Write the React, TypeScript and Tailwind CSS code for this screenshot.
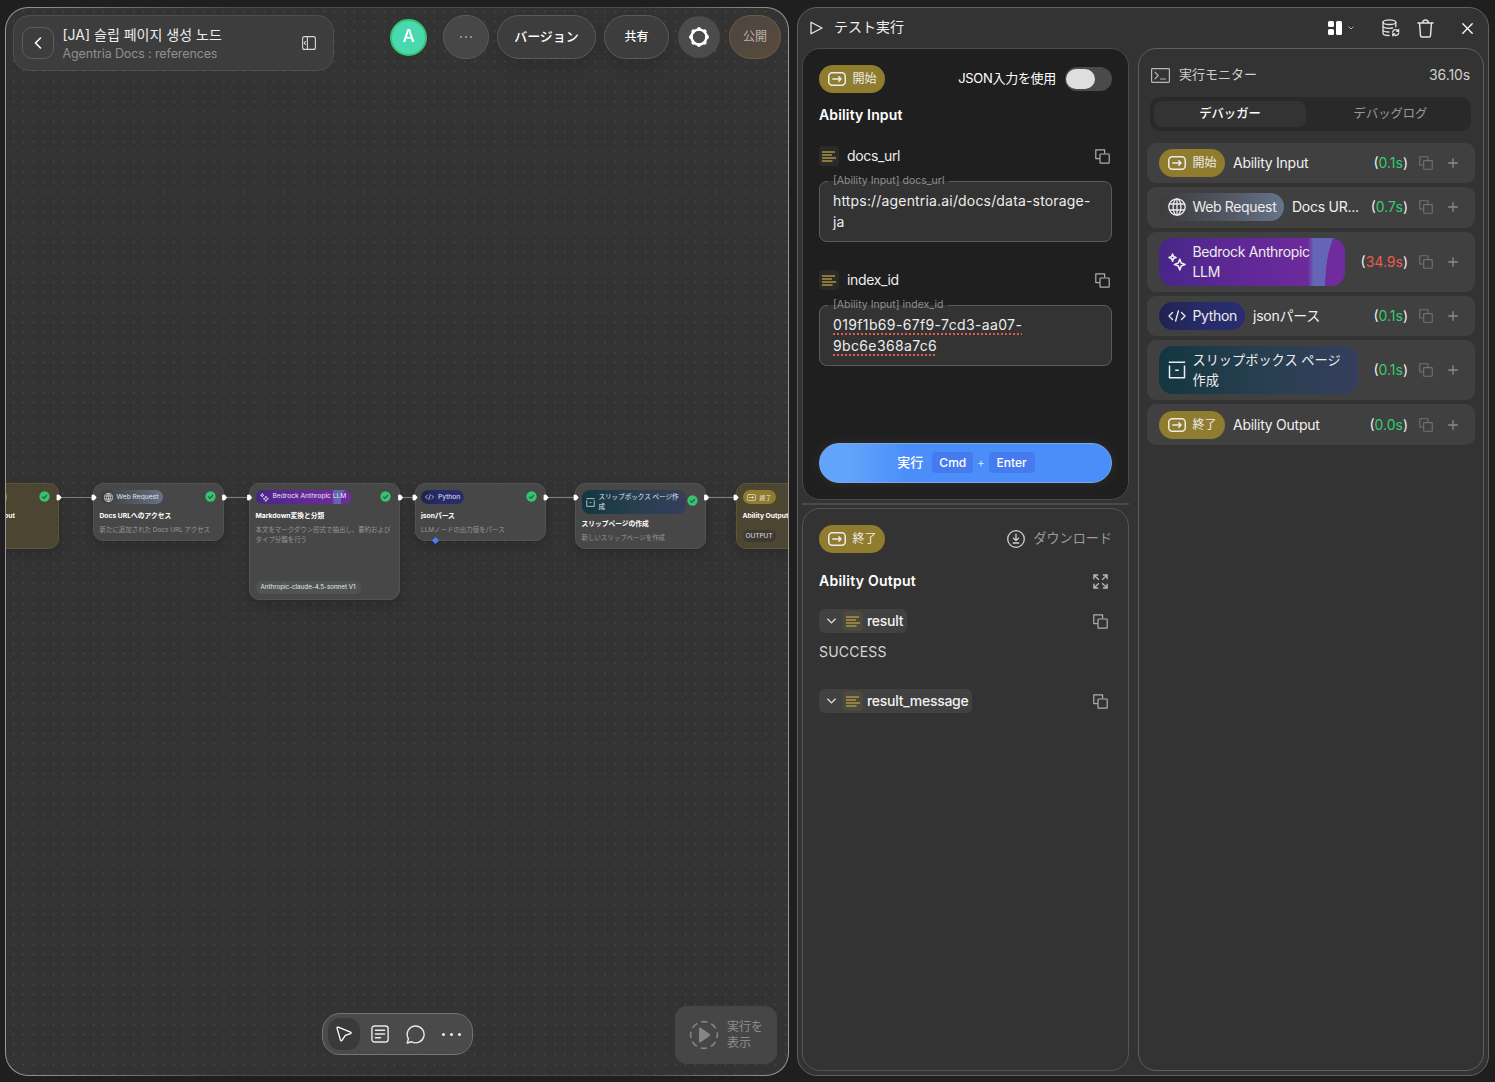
import React from "react";

type BadgeKind = "start" | "end" | "web" | "bedrock" | "python" | "slip";

interface MonitorItem {
  kind: BadgeKind;
  badge: string;
  name?: string;
  time: string;
  slow?: boolean;
  tall?: boolean;
}

const MONITOR_ITEMS: MonitorItem[] = [
  { kind: "start", badge: "開始", name: "Ability Input", time: "0.1s" },
  { kind: "web", badge: "Web Request", name: "Docs UR...", time: "0.7s" },
  { kind: "bedrock", badge: "Bedrock Anthropic LLM", time: "34.9s", slow: true, tall: true },
  { kind: "python", badge: "Python", name: "jsonパース", time: "0.1s" },
  { kind: "slip", badge: "スリップボックス ページ作成", time: "0.1s", tall: true },
  { kind: "end", badge: "終了", name: "Ability Output", time: "0.0s" },
];

const BADGE_STYLES: Record<BadgeKind, string> = {
  start: "bg-[#8f7c2f]",
  end: "bg-[#8f7c2f]",
  web: "bg-linear-to-r from-[#3c3c3c] via-[#50555f] to-[#66748c]",
  bedrock:
    "bg-[radial-gradient(ellipse_10.8%_125%_at_100%_100%,#702c9f_97%,transparent_100%),linear-gradient(90deg,#472688_0%,#5b2894_35%,#6d2a9c_80%,#6465b4_83%,#6465b4_100%)]",
  python: "bg-linear-to-r from-[#20234f] via-[#272b6a] to-[#292d6e]",
  slip: "bg-linear-to-r from-[#123640] via-[#273f50] to-[#353e5c]",
};

const BADGE_WIDTHS: Record<BadgeKind, string> = {
  start: "w-[66px]",
  end: "w-[66px]",
  web: "w-[125px]",
  bedrock: "w-[186px]",
  python: "w-[86px]",
  slip: "w-[199px]",
};

const BADGE_TEXT: Record<BadgeKind, string> = {
  start: "text-xs",
  end: "text-xs",
  web: "text-sm tracking-[-0.35px]",
  bedrock: "w-[126px] text-sm leading-5 tracking-[-0.35px]",
  python: "text-sm tracking-[-0.35px]",
  slip: "w-[156px] text-[13.2px] leading-5",
};

function FlowIcon({ className }: { className?: string }) {
  return (
    <svg viewBox="0 0 18 14" className={className} fill="none" stroke="currentColor" strokeWidth="1.5" strokeLinecap="round" strokeLinejoin="round">
      <rect x="0.75" y="0.75" width="16.5" height="12.5" rx="3.5" />
      <path d="M4.8 7h8.2M10.8 4.8 13 7l-2.2 2.2" />
    </svg>
  );
}

function GlobeIcon({ className }: { className?: string }) {
  return (
    <svg viewBox="0 0 18 18" className={className} fill="none" stroke="currentColor" strokeWidth="1.3">
      <circle cx="9" cy="9" r="8.2" />
      <ellipse cx="9" cy="9" rx="3.9" ry="8.2" />
      <path d="M1.5 6h15M1.5 12h15M9 .8v16.4" />
    </svg>
  );
}

function SparkleIcon({ className }: { className?: string }) {
  return (
    <svg viewBox="0 0 18 18" className={className} fill="none" stroke="currentColor" strokeWidth="1.6" strokeLinejoin="round">
      <path d="M11.8 6.2 13.2 10l3.8 1.6-3.8 1.5-1.4 3.9-1.5-3.9-3.8-1.5 3.8-1.6z" />
      <path d="m4.6 1 .9 2.6 2.5 1-2.5 1-.9 2.6-1-2.6-2.5-1 2.5-1z" />
    </svg>
  );
}

function CodeIcon({ className }: { className?: string }) {
  return (
    <svg viewBox="0 0 18 12" className={className} fill="none" stroke="currentColor" strokeWidth="1.4" strokeLinecap="round" strokeLinejoin="round">
      <path d="M4.5 2.5 1 6l3.5 3.5M13.5 2.5 17 6l-3.5 3.5M10.4 1 7.6 11" />
    </svg>
  );
}

function BoxIcon({ className }: { className?: string }) {
  return (
    <svg viewBox="0 0 18 18" className={className} fill="none" stroke="currentColor" strokeWidth="1.5" strokeLinejoin="round">
      <path d="M.8 1.2h16.4M1.5 4.5v12.3h15V4.5M7.2 9.2h3.6" />
    </svg>
  );
}

function CopyIcon({ className }: { className?: string }) {
  return (
    <svg viewBox="0 0 15 15" className={className} fill="none" stroke="currentColor" strokeWidth="1.2" strokeLinejoin="round">
      <path d="M4.6 9.6H.8V.8h8.8v3.8" />
      <rect x="5" y="5" width="9.2" height="9.2" rx="0.6" />
    </svg>
  );
}

function LinesIcon() {
  return (
    <svg viewBox="0 0 14 11" className="h-[11px] w-[14px]" fill="none" stroke="#a8924a" strokeWidth="1.5">
      <path d="M0 1h13M0 4h10M0 7h14M0 10h10.5" />
    </svg>
  );
}

function KindIcon({ kind, small }: { kind: BadgeKind; small?: boolean }) {
  if (kind === "web") return <GlobeIcon className={small ? "size-[9px]" : "size-[18px]"} />;
  if (kind === "bedrock") return <SparkleIcon className={small ? "size-[9px]" : "size-[18px]"} />;
  if (kind === "python") return <CodeIcon className={small ? "h-[6px] w-[9px]" : "h-[12px] w-[18px]"} />;
  if (kind === "slip") return <BoxIcon className={small ? "size-[9px]" : "size-[18px]"} />;
  return <FlowIcon className={small ? "h-[7px] w-[9px]" : "h-[14px] w-[18px]"} />;
}

function Badge({ kind, label, tall }: { kind: BadgeKind; label: string; tall?: boolean }) {
  return (
    <div
      className={`flex shrink-0 items-center gap-[7px] pl-[8.5px] text-[#ececec] ${BADGE_STYLES[kind]} ${BADGE_WIDTHS[kind]} ${
        tall ? "h-12 rounded-[14px]" : "h-7 rounded-full"
      }`}
    >
      <span className="shrink-0">
        <KindIcon kind={kind} />
      </span>
      <span className={BADGE_TEXT[kind]}>{label}</span>
    </div>
  );
}

/* ---------- canvas nodes ---------- */

function CheckDot({ className }: { className: string }) {
  return (
    <svg viewBox="0 0 12 12" className={`absolute size-[11px] ${className}`}>
      <circle cx="6" cy="6" r="5.6" fill="#35c46d" />
      <path d="m3.4 6.2 1.9 1.8 3.4-3.6" fill="none" stroke="#2b4a38" strokeWidth="1.2" />
    </svg>
  );
}

function NodeBadge({ kind, label, className }: { kind: BadgeKind; label: string; className: string }) {
  return (
    <div className={`flex items-center gap-[4px] pl-1 text-[#e6e6e6] ${BADGE_STYLES[kind]} ${className}`}>
      <span className="shrink-0">
        <KindIcon kind={kind} small />
      </span>
      <span>{label}</span>
    </div>
  );
}

function CanvasNode({
  className,
  badge,
  title,
  description,
  children,
}: {
  className: string;
  badge: React.ReactNode;
  title: string;
  description?: string;
  children?: React.ReactNode;
}) {
  return (
    <div className={`absolute rounded-[10px] border px-[5.5px] pt-[6px] shadow-[0_5px_12px_rgba(0,0,0,0.18)] ${className}`}>
      {badge}
      <div className="mt-[6.5px] text-[6.75px] leading-[10px] font-bold whitespace-nowrap text-white">{title}</div>
      {description && (
        <div className="mt-[4px] text-[6.45px] leading-[10px] whitespace-pre text-[#969696]">{description}</div>
      )}
      {children}
    </div>
  );
}

const EDGES = [
  { from: 58.5, to: 94.5 },
  { from: 224, to: 250 },
  { from: 400, to: 415.5 },
  { from: 545.5, to: 576.5 },
  { from: 706, to: 736.5 },
];

function Canvas() {
  return (
    <div className="absolute inset-0 overflow-hidden rounded-[22px] bg-[radial-gradient(circle,#454545_0.8px,transparent_1.1px)] bg-size-[10.04px_10.04px] bg-position-[2.3px_-1.6px]">
      <CanvasNode
        className="top-[475px] -left-[66px] h-[66px] w-[119px] border-[#5d5537] bg-[#4b4531]"
        title=""
        badge={<div className="absolute top-1.5 right-[51px] h-[14px] w-8 rounded-full bg-[#a18729]" />}
      >
        <div className="absolute top-[26.5px] right-[43px] text-[6.75px] leading-[10px] font-bold whitespace-nowrap text-white">Ability Input</div>
        <CheckDot className="top-[7px] right-2" />
      </CanvasNode>

      <CanvasNode
        className="top-[475px] left-[87px] h-[58px] w-[131px] border-[#525252] bg-[#474747]"
        title="Docs URLへのアクセス"
        description="新たに追加された Docs URL アクセス"
        badge={<NodeBadge kind="web" label="Web Request" className="h-[14px] w-[63px] rounded-full text-[6.7px]" />}
      >
        <CheckDot className="top-[7px] right-[7.5px]" />
      </CanvasNode>

      <CanvasNode
        className="top-[475px] left-[243px] h-[117px] w-[151px] border-[#525252] bg-[#474747]"
        title="Markdown変換と分類"
        description={"本文をマークダウン形式で抽出し、要約および\nタイプ分類を行う"}
        badge={<NodeBadge kind="bedrock" label="Bedrock Anthropic LLM" className="h-[14px] w-[95px] rounded-full text-[6.65px] whitespace-nowrap" />}
      >
        <CheckDot className="top-[7px] right-[8px]" />
        <div className="absolute bottom-[5px] left-[5.5px] rounded-md bg-[#505354] px-[5px] text-[6.25px] leading-[13px] text-[#e8e8e8]">
          Anthropic-claude-4.5-sonnet V1
        </div>
      </CanvasNode>

      <CanvasNode
        className="top-[475px] left-[408.5px] h-[58px] w-[131px] border-[#525252] bg-[#474747]"
        title="jsonパース"
        description="LLMノードの出力値をパース"
        badge={<NodeBadge kind="python" label="Python" className="h-[14px] w-[43px] rounded-full text-[6.7px]" />}
      >
        <CheckDot className="top-[7px] right-[7.5px]" />
        <div className="absolute -bottom-[3px] left-[17px] size-[5px] rotate-45 bg-[#4d7df2]" />
      </CanvasNode>

      <CanvasNode
        className="top-[475px] left-[569px] h-[66px] w-[131px] border-[#525252] bg-[#474747]"
        title="スリップページの作成"
        description="新しいスリップページを作成"
        badge={<NodeBadge kind="slip" label="スリップボックス ページ作成" className="-mb-[2px] h-6 w-[104px] rounded-[8px] pr-1 text-[6.55px] leading-[10px]" />}
      >
        <CheckDot className="top-[11px] right-[7.5px]" />
      </CanvasNode>

      <CanvasNode
        className="top-[475px] left-[730px] h-[66px] w-[131px] border-[#5d5537] bg-[#4b4531]"
        title="Ability Output"
        badge={<NodeBadge kind="end" label="終了" className="h-[14px] w-[33px] rounded-full text-[6px]" />}
      >
        <div className="mt-[9px] w-[33px] rounded-md bg-[#3c3a33] text-center text-[6.5px] leading-[12px] text-[#e0e0e0]">OUTPUT</div>
      </CanvasNode>

      <svg className="absolute inset-0" width="782" height="1067" viewBox="6 8 782 1067">
        {EDGES.map((edge) => (
          <g key={edge.from}>
            <path d={`M${edge.from} 497.5H${edge.to}`} stroke="#7c7c7c" strokeWidth="1.2" />
            <path d={`M${edge.from - 1.5} 495h2.2l2 2.5-2 2.5h-2.2z`} fill="#fff" stroke="#fff" strokeWidth="0.8" strokeLinejoin="round" />
            <path d={`M${edge.to - 2.5} 495h2.2l2 2.5-2 2.5h-2.2z`} fill="#fff" stroke="#fff" strokeWidth="0.8" strokeLinejoin="round" />
          </g>
        ))}
      </svg>
    </div>
  );
}

const GEAR_TEETH = [0, 45, 90, 135, 180, 225, 270, 315];

function CanvasHeader() {
  return (
    <div className="relative flex items-start justify-between pt-[7px] pr-[7px] pl-[7px]">
      <div className="flex h-14 w-[321px] items-center rounded-[16px] border border-[#4f4f4f] bg-[#3d3d3d] pr-4 pl-2">
        <div className="flex size-8 items-center justify-center rounded-[10px] border border-[#5c5c5c]">
          <svg viewBox="0 0 8 12" className="h-[12px] w-[8px]" fill="none" stroke="#fff" strokeWidth="1.6" strokeLinecap="round" strokeLinejoin="round">
            <path d="M6.5 1 1.5 6l5 5" />
          </svg>
        </div>
        <div className="mt-[2px] ml-[8.5px] flex-1">
          <div className="text-sm leading-[20px] whitespace-nowrap text-[#ededed]">[JA] 슬립 페이지 생성 노드</div>
          <div className="text-[12.5px] leading-[18px] tracking-[-0.12px] text-[#8f8f8f]">Agentria Docs : references</div>
        </div>
        <svg viewBox="0 0 14 14" className="mr-px size-[14px]" fill="none" stroke="#d8d8d8" strokeWidth="1.1">
          <rect x="0.6" y="0.6" width="12.8" height="12.8" rx="2" />
          <path d="M5.4.6v12.8M3.8 5 2.2 7l1.6 2" />
        </svg>
      </div>

      <div className="flex h-11 items-center">
        <div className="mr-4 flex size-[37px] items-center justify-center rounded-full border-2 border-[#35c46d] bg-[#4ad8b0] text-[17px] font-medium text-white">
          A
        </div>
        <div className="mr-2 flex h-11 w-[46px] items-center justify-center gap-[3px] rounded-full border border-[#5a5a5a] bg-[#474747]">
          <span className="size-[2px] rounded-full bg-[#a5a5a5]" />
          <span className="size-[2px] rounded-full bg-[#a5a5a5]" />
          <span className="size-[2px] rounded-full bg-[#a5a5a5]" />
        </div>
        <div className="mr-2 flex h-11 w-[99px] items-center justify-center rounded-full border border-[#5a5a5a] bg-[#3d3d3d] text-[13px] font-medium text-white shadow-[0_8px_14px_rgba(0,0,0,0.12)]">
          バージョン
        </div>
        <div className="mr-[9px] flex h-11 w-[65px] items-center justify-center rounded-full border border-[#5a5a5a] bg-[#3d3d3d] text-xs font-medium text-white shadow-[0_8px_14px_rgba(0,0,0,0.12)]">
          共有
        </div>
        <div className="mr-[9px] flex size-[42px] items-center justify-center rounded-full bg-[#4b4b4b]">
          <svg viewBox="0 0 22 22" className="size-[22px]" fill="#fff">
            <circle cx="11" cy="11" r="7.5" fill="none" stroke="#fff" strokeWidth="2.6" />
            {GEAR_TEETH.map((angle) => (
              <circle key={angle} cx="11" cy="2.9" r="1.9" transform={`rotate(${angle} 11 11)`} />
            ))}
          </svg>
        </div>
        <div className="flex h-11 w-[52px] items-center justify-center rounded-full border border-[#6f5b3c] bg-linear-to-br from-[#4c4444] to-[#5a4c3a] text-xs text-[#b9b4ac]">
          公開
        </div>
      </div>
    </div>
  );
}

function CanvasFooter() {
  return (
    <div className="relative mt-auto grid grid-cols-[1fr_151px_1fr] items-center pb-[11px]">
      <div />
      <div className="-mt-[2px] flex h-[42px] w-[151px] items-center rounded-[18px] border border-[#747474] bg-[#4a4a4a] pl-[5px]">
        <div className="flex size-8 items-center justify-center rounded-[12px] bg-[#3a3a3a]">
          <svg viewBox="0 0 16 16" className="size-4" fill="none" stroke="#fff" strokeWidth="1.3" strokeLinejoin="round">
            <path d="M1 2.1C.9 1.3 1.5.9 2.2 1.2l12.3 5c.8.3.8 1.2 0 1.5L9.3 9.4 6 14.4c-.5.7-1.3.5-1.5-.3z" />
          </svg>
        </div>
        <div className="flex w-9 justify-center pl-1">
          <svg viewBox="0 0 18 18" className="size-[18px]" fill="none" stroke="#e8e8e8" strokeWidth="1.4" strokeLinecap="round">
            <rect x="0.9" y="1" width="16.2" height="16" rx="2.6" />
            <path d="M4.4 5.2h9.2M4.4 9h9.2M4.4 12.8h5.2" />
          </svg>
        </div>
        <div className="flex w-9 justify-center pl-1">
          <svg viewBox="0 0 19 19" className="size-[19px]" fill="none" stroke="#e8e8e8" strokeWidth="1.4" strokeLinejoin="round">
            <path d="M9.7 1a8.4 8.4 0 1 1-4 15.8L1.2 18l1.2-4.3A8.4 8.4 0 0 1 9.7 1z" />
          </svg>
        </div>
        <div className="ml-[10px] flex gap-[5px]">
          <span className="size-[3px] rounded-full bg-[#f2f2f2]" />
          <span className="size-[3px] rounded-full bg-[#f2f2f2]" />
          <span className="size-[3px] rounded-full bg-[#f2f2f2]" />
        </div>
      </div>
      <div className="mr-[11px] flex h-[58px] w-[102px] items-center justify-self-end rounded-[12px] bg-[#464646] pl-[14px] text-[#8d8d8d]">
        <svg viewBox="0 0 30 30" className="size-[30px]">
          <circle cx="15" cy="15" r="13.4" fill="none" stroke="#858585" strokeWidth="1.6" strokeDasharray="6.4 4.12" strokeDashoffset="3.2" />
          <path d="M10 8.8c0-1 1-1.5 1.8-1l8.8 6.1c.8.6.8 1.6 0 2.2l-8.800 6.1c-.8.5-1.8 0-1.8-1z" fill="#858585" />
        </svg>
        <div className="ml-2 text-xs leading-4">
          実行を
          <br />
          表示
        </div>
      </div>
    </div>
  );
}

/* ---------- test run panel ---------- */

function PanelHeader() {
  return (
    <div className="flex h-10 items-center pr-[15px] pl-3 text-white">
      <svg viewBox="0 0 13 14" className="h-[14px] w-[13px]" fill="none" stroke="#e8e8e8" strokeWidth="1.3" strokeLinejoin="round">
        <path d="M1 1.2v11.6L12 7z" />
      </svg>
      <div className="-mt-[2px] ml-[11px] flex-1 text-sm text-[#f0f0f0]">テスト実行</div>
      <div className="flex gap-[2px]">
        <div className="flex flex-col gap-[2px]">
          <span className="h-[6px] w-[6px] rounded-[1.5px] bg-white" />
          <span className="h-[6px] w-[6px] rounded-[1.5px] bg-white" />
        </div>
        <span className="h-[14px] w-[6px] rounded-[1.5px] bg-white" />
      </div>
      <svg viewBox="0 0 6 4" className="ml-[6px] h-1 w-1.5" fill="none" stroke="#b0b0b0" strokeWidth="1">
        <path d="m.5.5 2.5 2.5L5.5.5" />
      </svg>
      <svg viewBox="0 0 18 18" className="ml-[28px] size-[18px]" fill="none" stroke="#e4e4e4" strokeWidth="1.3" strokeLinecap="round">
        <ellipse cx="7.4" cy="3.2" rx="6.4" ry="2.3" />
        <path d="M1 3.2v11c0 1.3 2.6 2.3 6 2.3M13.8 3.2v4.6M1 7c0 1.3 2.8 2.3 6.4 2.3 1.2 0 2.3-.1 3.2-.3M1 10.7c0 1.2 2.6 2.2 6 2.3" />
        <path d="M10.6 13.2a3.1 3.1 0 0 1 5.7-1.1M16.8 13.9a3.1 3.1 0 0 1-5.7 1.1M16.6 10.4v1.9h-1.9M10.8 16.8v-1.9h1.9" />
      </svg>
      <svg viewBox="0 0 18 20" className="ml-[17px] h-[19px] w-[17px]" fill="none" stroke="#e4e4e4" strokeWidth="1.5" strokeLinecap="round" strokeLinejoin="round">
        <path d="M1 4.2h16M2.7 4.5l1 13c.1.9.6 1.5 1.5 1.5h7.6c.9 0 1.4-.6 1.5-1.5l1-13M6 4c0-2 1-3 3-3s3 1 3 3" />
      </svg>
      <svg viewBox="0 0 11 11" className="ml-[28px] size-[11px]" fill="none" stroke="#fff" strokeWidth="1.3" strokeLinecap="round">
        <path d="m.8.8 9.4 9.4M10.2.8.8 10.2" />
      </svg>
    </div>
  );
}

function InputField({ name, lines, misspelled }: { name: string; lines: string[]; misspelled?: boolean }) {
  return (
    <div>
      <div className="flex h-5 items-center">
        <div className="flex size-5 items-center justify-center rounded-[4px] bg-[#2c2a25]">
          <LinesIcon />
        </div>
        <div className="ml-2 flex-1 text-sm tracking-[-0.35px] text-[#ededed]">{name}</div>
        <CopyIcon className="mr-0.5 size-[15px] text-[#b0b0b0]" />
      </div>
      <fieldset className="mt-[7px] h-[69px] rounded-[8px] border border-[#5a5a5a] bg-[#333] px-[8px]">
        <legend className="h-[17px] px-[5px] text-[10.5px] leading-[15px] text-[#8f8f8f]">{`[Ability Input] ${name}`}</legend>
        <div className={`pl-[5px] text-sm leading-[21px] ${misspelled ? "tracking-[0.36px]" : "tracking-[0.17px]"}`}>
          {lines.map((line) => (
            <div key={line} className="text-[#ededed]">
              <span className={misspelled ? "underline decoration-[#e05a50] decoration-dotted decoration-[1.5px] underline-offset-[3px]" : ""}>
                {line}
              </span>
            </div>
          ))}
        </div>
      </fieldset>
    </div>
  );
}

function InputCard() {
  return (
    <div className="flex h-[452px] flex-col rounded-[18px] border border-[#4a4a4a] bg-[#1f1f1f] px-4 pt-4 pb-4">
      <div className="flex items-center">
        <Badge kind="start" label="開始" />
        <div className="ml-auto text-[13px] tracking-[-0.3px] text-white">JSON入力を使用</div>
        <div className="ml-[9px] flex h-6 w-[47px] items-center rounded-full bg-[#4a4a4a] pl-px">
          <div className="h-[20px] w-[29px] rounded-full bg-[#dedede]" />
        </div>
      </div>
      <div className="mt-3 text-sm leading-5 font-semibold tracking-[0.15px] text-white">Ability Input</div>
      <div className="mt-[21px]">
        <InputField name="docs_url" lines={["https://agentria.ai/docs/data-storage-", "ja"]} />
      </div>
      <div className="mt-7">
        <InputField name="index_id" lines={["019f1b69-67f9-7cd3-aa07-", "9bc6e368a7c6"]} misspelled />
      </div>
      <div className="mt-auto flex h-10 items-center justify-center rounded-full border border-[#78a8e8] bg-linear-to-r from-[#62a4fb] from-10% to-[#4b8ef9] to-30% pl-px text-[13px] font-medium text-white shadow-[0_0_12px_rgba(255,255,255,0.07)]">
        実行
        <span className="-mt-px ml-[9px] rounded-[4px] bg-[#467bef] px-[7px] text-xs leading-[21px]">Cmd</span>
        <span className="mx-1 text-[11px] text-[#cfe0ff]">+</span>
        <span className="-mt-px rounded-[4px] bg-[#467bef] px-2 text-xs leading-[21px]">Enter</span>
      </div>
    </div>
  );
}

function OutputHeader({ name }: { name: string }) {
  return (
    <div className="flex h-6 items-center justify-between">
      <div className="flex h-6 items-center rounded-[6px] bg-[#414141] pr-1 pl-2">
        <svg viewBox="0 0 10 6" className="mr-[7px] h-[6px] w-[9px]" fill="none" stroke="#e8e8e8" strokeWidth="1.3" strokeLinecap="round" strokeLinejoin="round">
          <path d="m.8.8 4.2 4.2L9.2.8" />
        </svg>
        <div className="mr-1 flex size-5 items-center justify-center rounded-[4px] bg-[#4f483d]">
          <LinesIcon />
        </div>
        <span className="text-sm font-medium tracking-[-0.28px] text-[#f2f2f2]">{name}</span>
      </div>
      <CopyIcon className="mr-1 size-[15px] text-[#b0b0b0]" />
    </div>
  );
}

function OutputCard() {
  return (
    <div className="h-[563px] rounded-[18px] border border-[#555] bg-[#333] px-4 pt-4">
      <div className="flex items-center">
        <Badge kind="end" label="終了" />
        <svg viewBox="0 0 18 18" className="ml-auto size-[18px]" fill="none" stroke="#d0d0d0" strokeWidth="1.3" strokeLinecap="round" strokeLinejoin="round">
          <circle cx="9" cy="9" r="8.3" />
          <path d="M9 4.2v6.3M6.5 8.2 9 10.6l2.5-2.4M6.2 13h5.6" />
        </svg>
        <div className="ml-2 text-[13.1px] text-[#9c9c9c]">ダウンロード</div>
      </div>
      <div className="mt-[18px] flex items-center justify-between">
        <div className="text-sm leading-5 font-semibold tracking-[0.25px] text-white">Ability Output</div>
        <svg viewBox="0 0 16 16" className="mr-1 size-[15px]" fill="none" stroke="#b8b8b8" strokeWidth="1.5">
          <path d="M1 5.5V1h4.5M1.2 1.2l5 5M10.5 1H15v4.5M14.8 1.2l-5 5M1 10.5V15h4.5M1.2 14.8l5-5M10.5 15H15v-4.5M14.8 14.8l-5-5" />
        </svg>
      </div>
      <div className="mt-[18px]">
        <OutputHeader name="result" />
      </div>
      <div className="mt-[9px] text-sm leading-5 tracking-[0.2px] text-[#d6d6d6]">SUCCESS</div>
      <div className="mt-[27px]">
        <OutputHeader name="result_message" />
      </div>
    </div>
  );
}

function MonitorRow({ item }: { item: MonitorItem }) {
  return (
    <div className={`flex items-center rounded-[9px] bg-[#404040] pr-[17px] pl-3 ${item.tall ? "h-[60.3px]" : "h-[40.3px]"}`}>
      <Badge kind={item.kind} label={item.badge} tall={item.tall} />
      {item.name && <div className="ml-2 text-sm tracking-[-0.25px] whitespace-nowrap text-[#f0f0f0]">{item.name}</div>}
      <div className="ml-auto text-sm text-[#f0f0f0]">
        (<span className={item.slow ? "text-[#ee5a4c]" : "text-[#34cc70]"}>{item.time}</span>)
      </div>
      <CopyIcon className="ml-[11px] size-[14px] text-[#707070]" />
      <svg viewBox="0 0 10 10" className="ml-[15px] size-[10px]" fill="none" stroke="#8a8a8a" strokeWidth="1.3" strokeLinecap="round">
        <path d="M5 .7v8.6M.7 5h8.6" />
      </svg>
    </div>
  );
}

function MonitorCard() {
  return (
    <div className="h-[1023px] w-[346px] rounded-[18px] border border-[#606060] bg-[#333] px-[8px]">
      <div className="mt-[15px] flex h-[22px] items-center pr-[5px] pl-[4px]">
        <svg viewBox="0 0 19 15" className="h-[15px] w-[19px]" fill="none" stroke="#b8b8b8" strokeWidth="1.2" strokeLinecap="round" strokeLinejoin="round">
          <rect x="0.6" y="0.6" width="17.8" height="13.8" rx="0.8" />
          <path d="m4 4.2 3.2 3.3L4 10.8M9.5 11h5" />
        </svg>
        <div className="ml-[9px] flex-1 text-[13px] text-[#cfcfcf]">実行モニター</div>
        <div className="text-sm tracking-[-0.1px] text-[#cfcfcf]">36.10s</div>
      </div>
      <div className="mr-[4px] ml-[3px] mt-[11px] flex h-[34px] items-center rounded-[10px] bg-[#292929] px-1 text-center text-[12.3px] leading-[26px]">
        <div className="w-[152px] rounded-[8px] bg-[#333] font-medium text-white">デバッガー</div>
        <div className="flex-1 pl-2 text-[#9a9a9a]">デバッグログ</div>
      </div>
      <div className="mt-[12px] flex w-[328px] flex-col gap-1">
        {MONITOR_ITEMS.map((item) => (
          <MonitorRow key={item.badge} item={item} />
        ))}
      </div>
    </div>
  );
}

export default function App() {
  return (
    <div className="flex h-[1082px] w-[1495px] gap-2 overflow-hidden bg-[#1f1f1f] pt-[7px] pl-[5px] font-['Inter','Noto_Sans_CJK_JP','Noto_Sans_CJK_KR',sans-serif]">
      <div className="relative flex h-[1069px] w-[784px] flex-col rounded-[23px] border border-transparent [background:linear-gradient(#333,#333)_padding-box,linear-gradient(90deg,#999,#4a4a4a_30%,#4a4a4a_80%,#999)_border-box]">
        <Canvas />
        <CanvasHeader />
        <CanvasFooter />
      </div>

      <div className="h-[1069px] w-[692px] rounded-[20px] border border-[#606060] bg-[#333]">
        <PanelHeader />
        <div className="flex justify-between pr-[4px] pl-[4px]">
          <div className="w-[327px]">
            <InputCard />
            <div className="my-[3px] h-[2px] bg-[#4a4a4a]" />
            <OutputCard />
          </div>
          <MonitorCard />
        </div>
      </div>
    </div>
  );
}
